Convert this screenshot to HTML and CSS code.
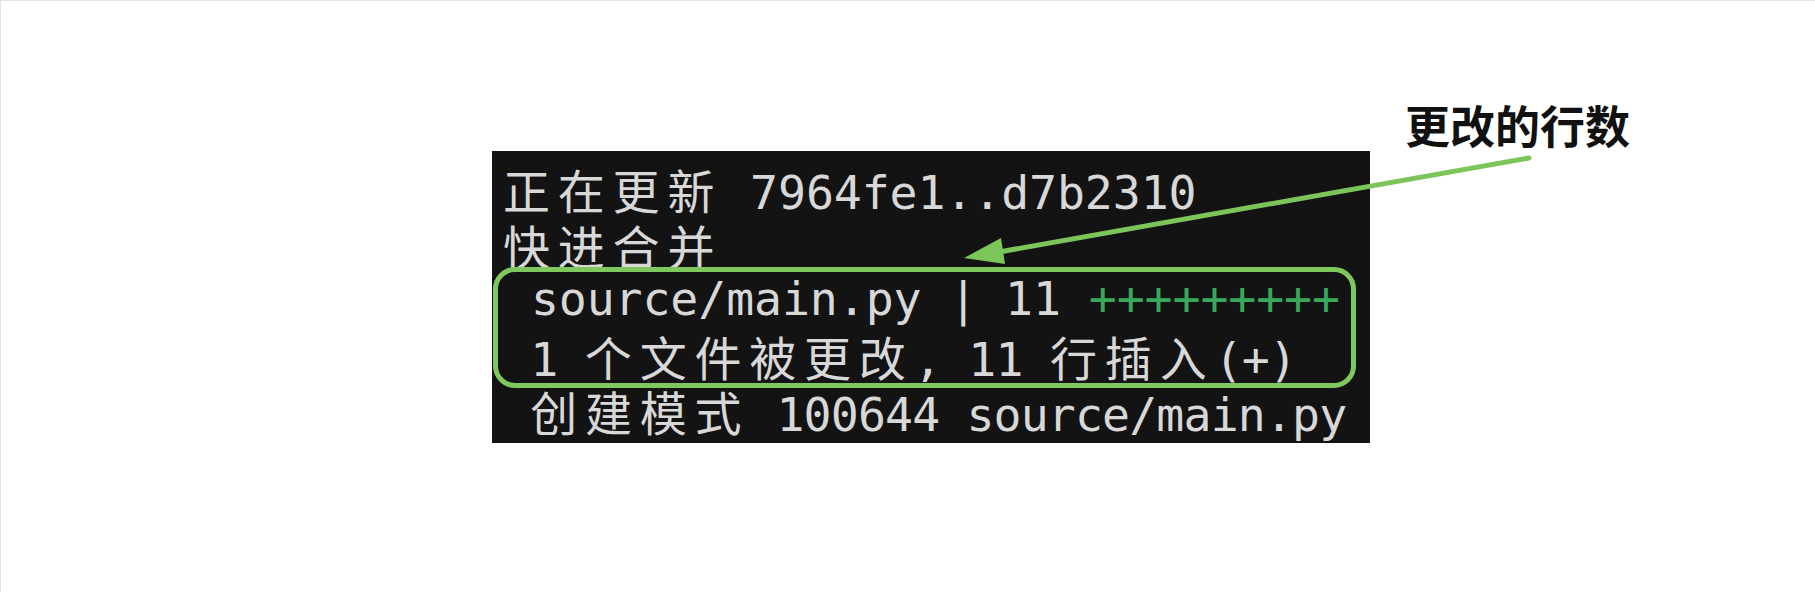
FILE: index.html
```html
<!DOCTYPE html>
<html lang="zh-CN">
<head>
<meta charset="utf-8">
<title>git pull</title>
<link rel="stylesheet" href="styles.css">
</head>
<body>
<div class="page">
  <div class="terminal">
    <div class="line wide"><span class="cjk">正在更新</span> 7964fe1..d7b2310</div>
    <div class="line"><span class="cjk">快进合并</span></div>
    <div class="line wide"> source/main.py | 11 <span class="plus">+++++++++</span></div>
    <div class="line narrow"> 1 <span class="cjk">个文件被更改</span>, 11 <span class="cjk">行插入</span>(+)</div>
    <div class="line narrower"> <span class="cjk">创建模式</span> 100644 source/main.py</div>
    <div class="highlight"></div>
  </div>
  <div class="label">更改的行数</div>
  <svg class="arrow" width="1815" height="592" viewBox="0 0 1815 592">
    <line x1="1528" y1="157" x2="998" y2="251" stroke="#7cc55b" stroke-width="5" stroke-linecap="round"/>
    <polygon points="963,257 1000,237 1004,263" fill="#7cc55b"/>
  </svg>
</div>
</body>
</html>
```
FILE: styles.css
```css
html, body {
  margin: 0;
  padding: 0;
  background: #ffffff;
}
.page {
  position: relative;
  width: 1815px;
  height: 592px;
  box-sizing: border-box;
  border-top: 1px solid #e2e2e2;
  border-left: 1px solid #e2e2e2;
  padding: 150px 0 0 491px;
  overflow: hidden;
}
.terminal {
  position: relative;
  width: 878px;
  height: 292px;
  box-sizing: border-box;
  background: #131313;
  padding: 10px 0 0 11px;
  overflow: hidden;
  color: #d8d8d8;
  font-family: "DejaVu Sans Mono", "Noto Sans CJK SC", monospace;
  font-size: 46.5px;
  letter-spacing: -0.6px;
}
.line {
  height: 55.6px;
  line-height: 55.6px;
  white-space: pre;
}
.line.wide {
  letter-spacing: -0.1px;
}
.line.narrow {
  letter-spacing: -0.72px;
}
.line.narrower {
  letter-spacing: -0.86px;
}
.cjk {
  font-family: "Noto Sans CJK SC", sans-serif;
  font-size: 47px;
  letter-spacing: 7.8px;
}
.plus {
  color: #3aa85b;
}
.highlight {
  position: absolute;
  left: 1px;
  top: 116px;
  width: 863px;
  height: 121px;
  box-sizing: border-box;
  border: 5px solid #7ec85e;
  border-radius: 22px;
}
.label {
  position: absolute;
  left: 1404px;
  top: 99px;
  font-family: "Noto Sans CJK SC", sans-serif;
  font-weight: 700;
  font-size: 45px;
  line-height: 50px;
  color: #111111;
}
.arrow {
  position: absolute;
  left: 0;
  top: 0;
}
```
